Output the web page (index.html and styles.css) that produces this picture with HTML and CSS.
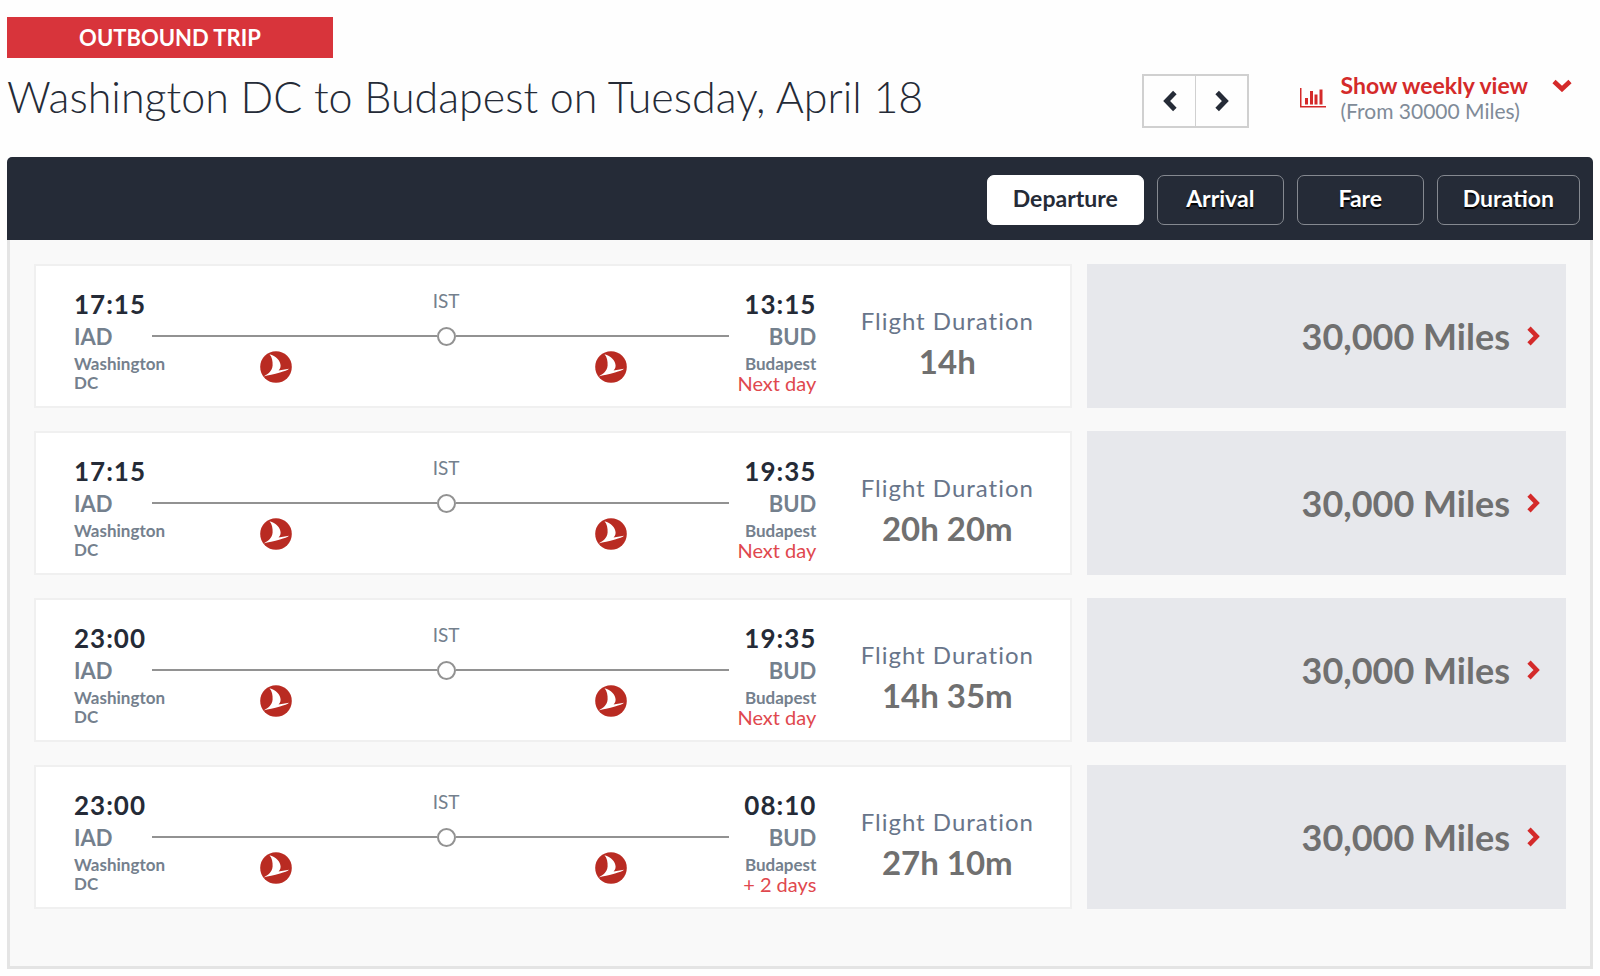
FILE: index.html
```html
<!DOCTYPE html>
<html lang="en">
<head>
    <meta charset="UTF-8">
    <meta name="viewport" content="width=device-width, initial-scale=1.0">
    <title>Outbound Trip</title>
    <link rel="stylesheet" href="styles.css">
</head>
<body>
    <!-- Shared icons -->
    <svg class="icon-defs" aria-hidden="true">
        <symbol id="chevron" viewBox="0 0 13 20">
            <path d="M2 2.2 L9.6 10 L2 17.8" fill="none" stroke="currentColor" stroke-width="4.6"/>
        </symbol>
        <symbol id="airline" viewBox="0 0 32 32">
            <circle cx="16" cy="16" r="15.8" fill="#b92b22"/>
            <path d="M9.5 3.2 C16 5 20.5 9.5 20.6 14.5 C20.6 17 19.6 18.5 18.6 19.4 L29 17.8 C28 19 24 20.4 20 21.6 C14 23.2 8 24.4 3.6 25.6 C8 23 12.2 20 12.6 14.5 C12.8 10 12 6 9.5 3.2 Z" fill="#fff"/>
        </symbol>
    </svg>

    <div class="container">
        <div class="trip-badge">OUTBOUND TRIP</div>

        <div class="trip-header">
            <h1>Washington DC to Budapest on Tuesday, April 18</h1>
            <div class="day-nav">
                <button type="button" aria-label="Previous day"><svg class="flip" width="14" height="22"><use href="#chevron"/></svg></button>
                <button type="button" aria-label="Next day"><svg width="14" height="22"><use href="#chevron"/></svg></button>
            </div>
            <button type="button" class="weekly">
                <svg width="26" height="20" viewBox="0 0 26 20" fill="currentColor">
                    <path d="M0 0h1.5v18H26v1.5H0z"/>
                    <path d="M5 10h3v6.5H5zM10 3h3v13.5h-3zM14.5 6.5h3v10h-3zM19.5 1.5h3v15h-3z"/>
                </svg>
                <span class="weekly-text">
                    <span class="weekly-title">Show weekly view
                        <svg width="20" height="13" viewBox="0 0 20 13"><path d="M2 2.5 L10 10 L18 2.5" fill="none" stroke="currentColor" stroke-width="4.6"/></svg>
                    </span>
                    <span class="weekly-from">(From 30000 Miles)</span>
                </span>
            </button>
        </div>

        <div class="sort-bar">
            <button type="button" class="sort active">Departure</button>
            <button type="button" class="sort">Arrival</button>
            <button type="button" class="sort">Fare</button>
            <button type="button" class="sort">Duration</button>
        </div>

        <div class="flights">
            <div class="flight">
                <div class="flight-info">
                    <div class="place">
                        <div class="time">17:15</div>
                        <div class="code">IAD</div>
                        <div class="city">Washington<br>DC</div>
                    </div>
                    <div class="route">
                        <span class="stop-code">IST</span>
                        <span class="line first"></span>
                        <span class="stop"></span>
                        <span class="line second"></span>
                        <svg class="logo first"><use href="#airline"/></svg>
                        <svg class="logo second"><use href="#airline"/></svg>
                    </div>
                    <div class="place arrive">
                        <div class="time">13:15</div>
                        <div class="code">BUD</div>
                        <div class="city">Budapest</div>
                        <div class="day">Next day</div>
                    </div>
                    <div class="duration">
                        <div class="duration-label">Flight Duration</div>
                        <div class="duration-value">14h</div>
                    </div>
                </div>
                <button type="button" class="price">30,000 Miles <svg width="13" height="20"><use href="#chevron"/></svg></button>
            </div>

            <div class="flight">
                <div class="flight-info">
                    <div class="place">
                        <div class="time">17:15</div>
                        <div class="code">IAD</div>
                        <div class="city">Washington<br>DC</div>
                    </div>
                    <div class="route">
                        <span class="stop-code">IST</span>
                        <span class="line first"></span>
                        <span class="stop"></span>
                        <span class="line second"></span>
                        <svg class="logo first"><use href="#airline"/></svg>
                        <svg class="logo second"><use href="#airline"/></svg>
                    </div>
                    <div class="place arrive">
                        <div class="time">19:35</div>
                        <div class="code">BUD</div>
                        <div class="city">Budapest</div>
                        <div class="day">Next day</div>
                    </div>
                    <div class="duration">
                        <div class="duration-label">Flight Duration</div>
                        <div class="duration-value">20h 20m</div>
                    </div>
                </div>
                <button type="button" class="price">30,000 Miles <svg width="13" height="20"><use href="#chevron"/></svg></button>
            </div>

            <div class="flight">
                <div class="flight-info">
                    <div class="place">
                        <div class="time">23:00</div>
                        <div class="code">IAD</div>
                        <div class="city">Washington<br>DC</div>
                    </div>
                    <div class="route">
                        <span class="stop-code">IST</span>
                        <span class="line first"></span>
                        <span class="stop"></span>
                        <span class="line second"></span>
                        <svg class="logo first"><use href="#airline"/></svg>
                        <svg class="logo second"><use href="#airline"/></svg>
                    </div>
                    <div class="place arrive">
                        <div class="time">19:35</div>
                        <div class="code">BUD</div>
                        <div class="city">Budapest</div>
                        <div class="day">Next day</div>
                    </div>
                    <div class="duration">
                        <div class="duration-label">Flight Duration</div>
                        <div class="duration-value">14h 35m</div>
                    </div>
                </div>
                <button type="button" class="price">30,000 Miles <svg width="13" height="20"><use href="#chevron"/></svg></button>
            </div>

            <div class="flight">
                <div class="flight-info">
                    <div class="place">
                        <div class="time">23:00</div>
                        <div class="code">IAD</div>
                        <div class="city">Washington<br>DC</div>
                    </div>
                    <div class="route">
                        <span class="stop-code">IST</span>
                        <span class="line first"></span>
                        <span class="stop"></span>
                        <span class="line second"></span>
                        <svg class="logo first"><use href="#airline"/></svg>
                        <svg class="logo second"><use href="#airline"/></svg>
                    </div>
                    <div class="place arrive">
                        <div class="time">08:10</div>
                        <div class="code">BUD</div>
                        <div class="city">Budapest</div>
                        <div class="day">+ 2 days</div>
                    </div>
                    <div class="duration">
                        <div class="duration-label">Flight Duration</div>
                        <div class="duration-value">27h 10m</div>
                    </div>
                </div>
                <button type="button" class="price">30,000 Miles <svg width="13" height="20"><use href="#chevron"/></svg></button>
            </div>
        </div>
    </div>
</body>
</html>
```
FILE: styles.css
```css
* {
    box-sizing: border-box;
}
body {
    font-family: Lato, 'Open Sans', sans-serif;
    background: #fefefe;
    color: #252b37;
    margin: 0;
}
button {
    font-family: inherit;
    color: inherit;
    background: none;
    border: none;
    margin: 0;
    padding: 0;
    cursor: pointer;
}
svg {
    display: block;
    flex: none;
}
.icon-defs {
    position: absolute;
    width: 0;
    height: 0;
}
.container {
    padding: 17px 7px 8px;
}
.trip-badge {
    width: 326px;
    background: #d8343b;
    color: #fff;
    font-size: 22px;
    font-weight: 700;
    line-height: 41px;
    text-align: center;
}

/* Title row */
.trip-header {
    display: flex;
    align-items: flex-start;
    padding: 14px 21px 29px 0;
}
h1 {
    flex: 1;
    margin: 0;
    padding-bottom: 7px;
    font-size: 43px;
    font-weight: 300;
    line-height: 49px;
}
.day-nav {
    display: flex;
    align-self: flex-end;
    border: 2px solid #d0d0d0;
    margin-right: 51px;
}
.day-nav button {
    width: 51px;
    height: 50px;
    display: flex;
    align-items: center;
    justify-content: center;
}
.day-nav button + button {
    width: 52px;
    border-left: 1px solid #d0d0d0;
}
.flip {
    transform: scaleX(-1);
}
.weekly {
    display: flex;
    align-items: center;
    gap: 14px;
    color: #d42a2a;
    text-align: left;
}
.weekly-text {
    display: flex;
    flex-direction: column;
    line-height: 26px;
}
.weekly-title {
    display: flex;
    align-items: center;
    gap: 24px;
    font-size: 23px;
    font-weight: 700;
}
.weekly-from {
    font-size: 21px;
    color: #808b98;
}

/* Sort buttons */
.sort-bar {
    display: flex;
    justify-content: flex-end;
    gap: 13px;
    padding: 18px 13px 15px;
    background: #252b37;
    border-radius: 5px 5px 0 0;
}
.sort {
    min-width: 127px;
    height: 50px;
    padding: 0 25px 4px;
    border: 1px solid #858990;
    border-radius: 7px;
    color: #fff;
    font-size: 23px;
    font-weight: 700;
    text-shadow: 0 2px 1px #000;
}
.sort.active {
    background: #fff;
    border-color: #fff;
    color: #252b37;
    text-shadow: none;
}

/* Flight list */
.flights {
    display: flex;
    flex-direction: column;
    gap: 23px;
    padding: 24px 24px 57px;
    background: #f9f9f9;
    border: 3px solid #e4e4e4;
    border-top: none;
}
.flight {
    display: flex;
    gap: 15px;
}
.flight-info {
    flex: 1 1 1039px;
    display: flex;
    min-height: 144px;
    padding: 22px 0 12px 38px;
    background: #fff;
    border: 2px solid #f0f0f0;
}
.place {
    width: 78px;
    color: #74808d;
    white-space: nowrap;
}
.place.arrive {
    width: 87px;
    text-align: right;
}
.time {
    color: #252b37;
    font-size: 26px;
    font-weight: 700;
    line-height: 32px;
    letter-spacing: 1px;
}
.code {
    font-size: 22px;
    font-weight: 700;
    line-height: 34px;
}
.city {
    font-size: 17px;
    font-weight: 700;
    line-height: 19px;
}
.day {
    color: #e0484e;
    font-size: 20px;
    line-height: 20px;
}
.route {
    flex: 1;
    display: grid;
    grid-template-columns: 284fr 19px 273fr;
    grid-template-rows: 24px 48px;
    grid-auto-rows: 32px;
    align-content: start;
    align-items: center;
}
.stop-code {
    grid-column: 2;
    grid-row: 1;
    justify-self: center;
    color: #74808d;
    font-size: 19px;
}
.line {
    grid-row: 2;
    height: 2px;
    background: #929292;
}
.stop {
    grid-row: 2;
    grid-column: 2;
    height: 19px;
    border: 2px solid #929292;
    border-radius: 50%;
}
.logo {
    grid-row: 3;
    justify-self: center;
    width: 32px;
    height: 32px;
    margin-top: -18px;
}
.first {
    grid-column: 1;
}
.second {
    grid-column: 3;
}
.logo.first {
    margin-right: 36px;
}
.logo.second {
    margin-left: 38px;
}
.duration {
    width: 246px;
    margin-left: 8px;
    padding-top: 18px;
    text-align: center;
}
.duration-label {
    color: #68758a;
    font-size: 24px;
    line-height: 30px;
    letter-spacing: 1px;
}
.duration-value {
    color: #707070;
    font-size: 33px;
    font-weight: 700;
    line-height: 50px;
}
.price {
    flex: 1 1 479px;
    display: flex;
    align-items: center;
    justify-content: flex-end;
    gap: 17px;
    padding-right: 26px;
    background: #e7e8ec;
    color: #707070;
    font-size: 36px;
    font-weight: 700;
}
.price svg {
    color: #d42a2a;
}
```
